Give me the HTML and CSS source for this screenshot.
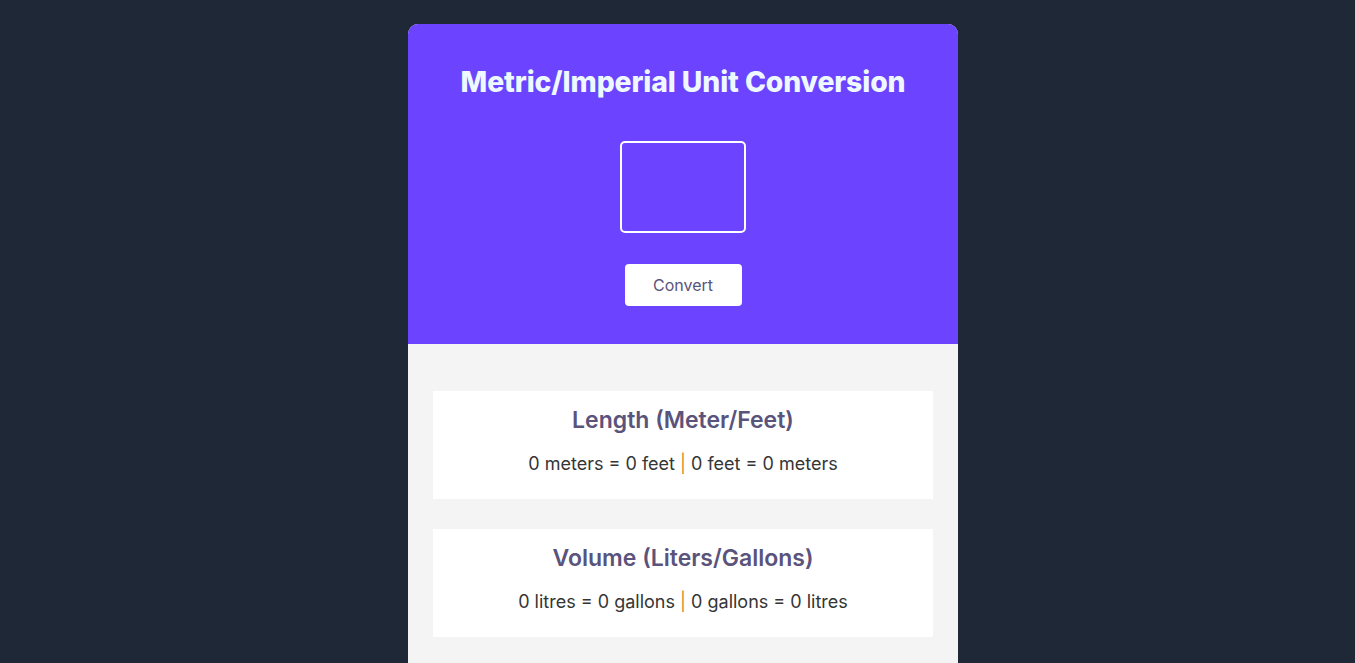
FILE: index.html
```html
<!DOCTYPE html>
<html lang="en">
<head>
<meta charset="utf-8">
<title>Unit Conversion</title>
<link rel="stylesheet" href="styles.css">
</head>
<body>
<main class="card">
  <section class="top">
    <h1 class="title">Metric/Imperial Unit Conversion</h1>
    <input class="num-input" type="text" aria-label="value">
    <button class="convert-btn" type="button">Convert</button>
  </section>
  <section class="results">
    <div class="panel">
      <h2 class="panel-title">Length (Meter/Feet)</h2>
      <p class="panel-text">0 meters = 0 feet <span class="sep">|</span> 0 feet = 0 meters</p>
    </div>
    <div class="panel">
      <h2 class="panel-title">Volume (Liters/Gallons)</h2>
      <p class="panel-text">0 litres = 0 gallons <span class="sep">|</span> 0 gallons = 0 litres</p>
    </div>
  </section>
</main>
</body>
</html>
```

FILE: styles.css
```css
html, body {
  margin: 0;
  padding: 0;
}
body {
  background: #1f2836;
  font-family: Inter, "Noto Sans", sans-serif;
  padding: 24px 0 0 11px;
  height: 663px;
  box-sizing: border-box;
  overflow: hidden;
}
.card {
  width: 550px;
  margin: 0 auto;
  border-radius: 10px 10px 0 0;
  overflow: hidden;
  background: #f4f4f4;
  min-height: 700px;
}
.top {
  background: #6c43ff;
  display: flex;
  flex-direction: column;
  align-items: center;
  padding: 41px 0 38px;
}
.title {
  margin: 0;
  font-size: 28.3px;
  line-height: 34px;
  font-weight: 800;
  color: #eef8ff;
  letter-spacing: -0.1px;
}
.num-input {
  margin-top: 42px;
  width: 126px;
  height: 92px;
  box-sizing: border-box;
  background: transparent;
  border: 2px solid #ffffff;
  border-radius: 5px;
  outline: none;
  color: #ffffff;
  font-size: 40px;
  text-align: center;
}
.convert-btn {
  margin-top: 31px;
  width: 117px;
  height: 42px;
  border: none;
  border-radius: 4px;
  background: #ffffff;
  color: #5a537b;
  font-family: Inter, "Noto Sans", sans-serif;
  font-size: 16px;
}
.results {
  padding: 47px 25px 20px;
  display: flex;
  flex-direction: column;
  gap: 30px;
}
.panel {
  background: #ffffff;
  height: 108px;
  box-sizing: border-box;
  padding-top: 15px;
  text-align: center;
}
.panel-title {
  margin: 0;
  font-size: 23px;
  line-height: 28px;
  font-weight: 600;
  color: #5a537b;
}
.panel-text {
  margin: 18px 0 0;
  font-size: 18px;
  line-height: 24px;
  color: #353535;
}
.sep {
  color: #d9882a;
}
```
